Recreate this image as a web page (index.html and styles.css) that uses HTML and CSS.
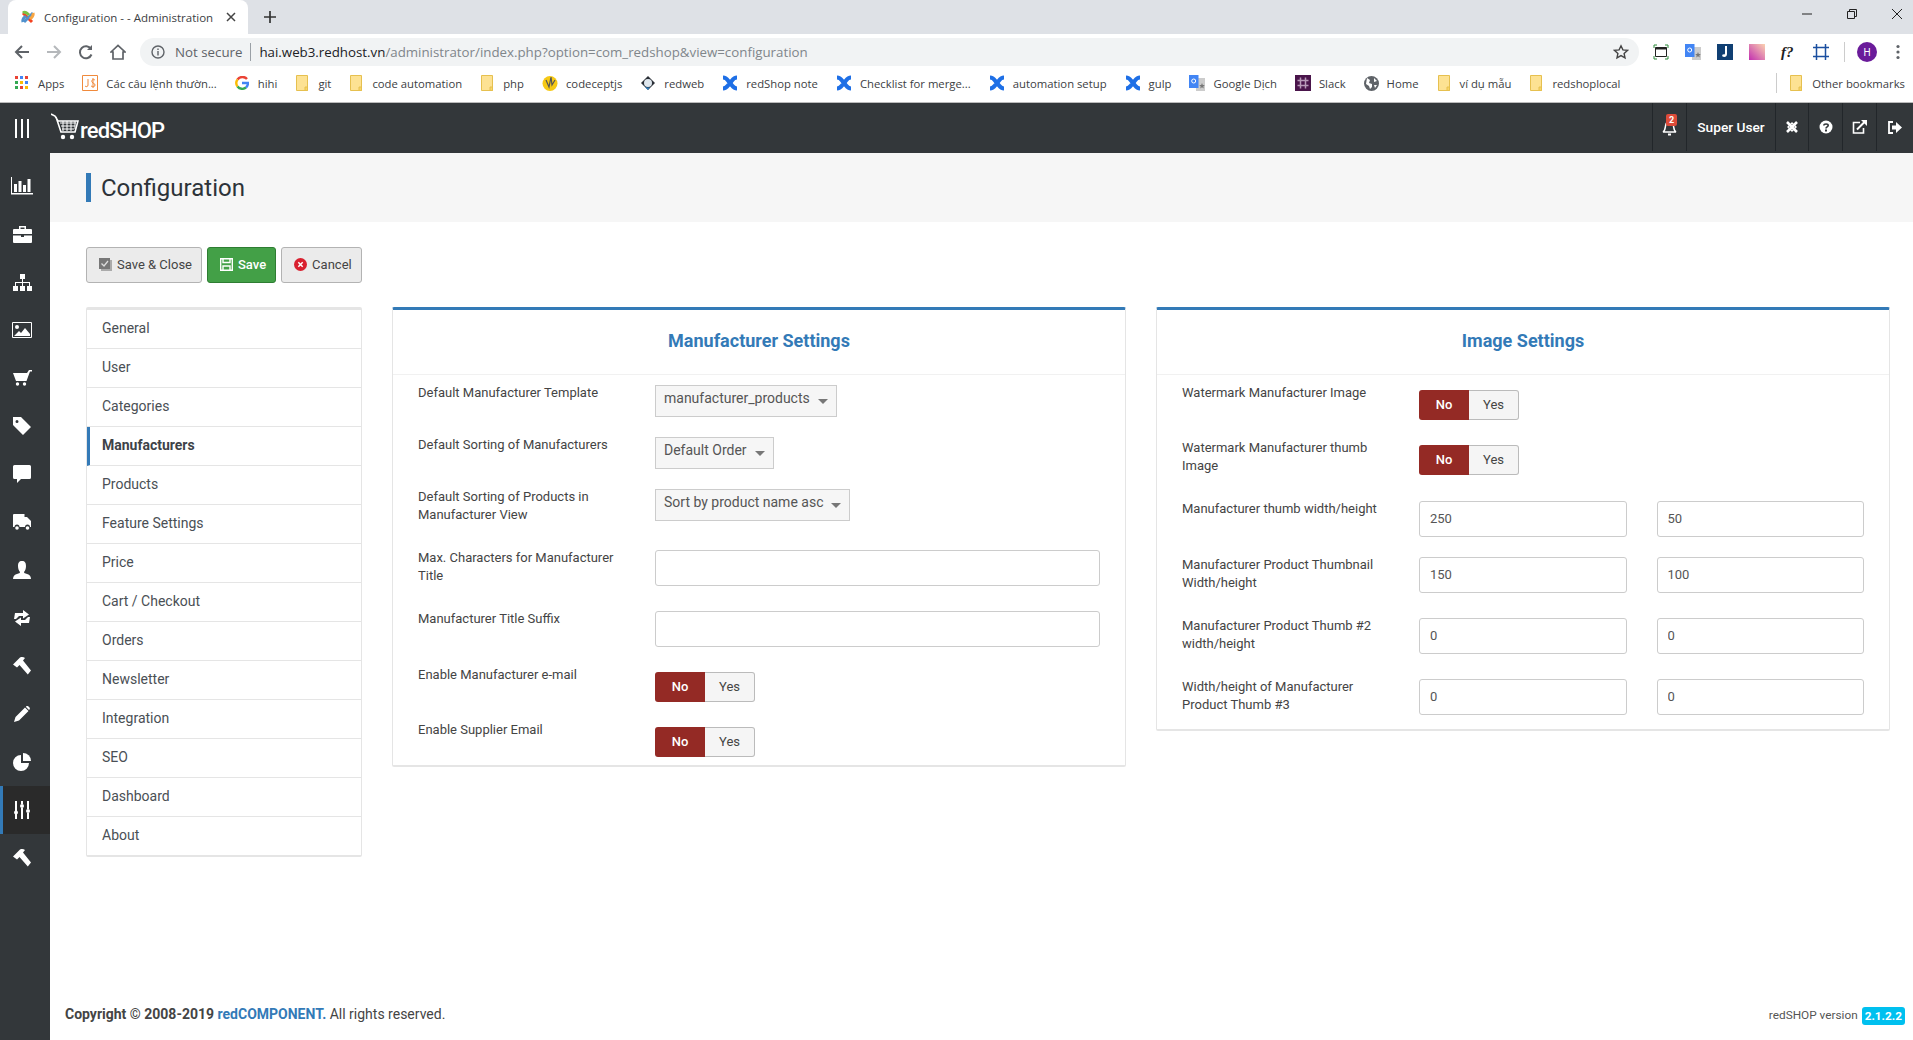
FILE: index.html
```html
<!DOCTYPE html>
<html lang="en">
<head>
	<meta charset="UTF-8">
	<title>Configuration - - Administration</title>
	<link rel="stylesheet" href="styles.css">
</head>
<body>
	<svg class="defs" width="0" height="0">
		<symbol id="folder" viewBox="0 0 12 16"><path d="M.5.5h11v15H.5z" fill="#fde293" stroke="#e6c04f"/><path d="M9 12h2.500v3.500H9z" fill="#f8d667" stroke="#e6c04f"/></symbol>
		<symbol id="cross" viewBox="0 0 16 16"><path d="M1 2.500c4 0 4.500 3 7 5.500s3 5.500 7 5.500M15 2.500c-4 0-4.500 3-7 5.500s-3 5.500-7 5.500" fill="none" stroke="#1e6fe6" stroke-width="4"/></symbol>
		<symbol id="gt" viewBox="0 0 16 16"><path d="M7 3h9v13H7z" fill="#ccc"/><path d="M0 0h9.500v13H0z" fill="#4285f4"/><path d="M13 8l.8 2 2 .1-1.500 1.300.5 2-1.800-1.100-1.800 1.100.5-2-1.500-1.300 2-.1z" fill="#777"/><circle cx="4.700" cy="6" r="2" fill="none" stroke="#fff"/></symbol>
		<symbol id="hammer" viewBox="0 0 18 18"><path d="M0 7.500L7 .5c2-.7 3.500-.5 5 .5L10 3.500 18 13.500 14.800 17.500 6.500 8 4 10.500z" fill="#fff"/></symbol>
	</svg>

	<div class="tabs">
		<div class="tab">
			<svg width="16" height="17" viewBox="0 0 16 17" fill="none" stroke-width="3"><path d="M3 4l5 5 4 4" stroke="#f44321"/><path d="M13 4L8 9l-4 4" stroke="#5091cd"/><path d="M3 4c2-2 4 0 6 2" stroke="#7ac143"/><path d="M13 4c1 3-1 4-3 6" stroke="#f9a541"/><path d="M3 13c-1-3 1-4 3-6" stroke="#5091cd"/></svg>
			<span class="tab-name">Configuration - - Administration</span>
			<svg class="tab-x" width="10" height="10" viewBox="0 0 10 10"><path d="M1 1l8 8M9 1L1 9" stroke="#444" stroke-width="1.500"/></svg>
		</div>
		<svg class="tab-add" width="14" height="14" viewBox="0 0 14 14"><path d="M7 1v12M1 7h12" stroke="#333" stroke-width="1.700"/></svg>
		<div class="win">
			<svg width="12" height="12" viewBox="0 0 12 12"><path d="M1 6h10" stroke="#222"/></svg>
			<svg width="12" height="12" viewBox="0 0 12 12" fill="none" stroke="#222"><path d="M1.500 3.500h7v7h-7zM3.500 3.500v-2h7v7h-2"/></svg>
			<svg width="12" height="12" viewBox="0 0 12 12"><path d="M1 1l10 10M11 1L1 11" stroke="#222"/></svg>
		</div>
	</div>

	<div class="toolbar">
		<svg class="nav-ico" width="16" height="16" viewBox="0 0 16 16" fill="none" stroke="#5f6368" stroke-width="2"><path d="M15 8H2M8 2L2 8l6 6"/></svg>
		<svg class="nav-ico" width="16" height="16" viewBox="0 0 16 16" fill="none" stroke="#b5b8bb" stroke-width="2"><path d="M1 8h13M8 2l6 6-6 6"/></svg>
		<svg class="nav-ico" width="16" height="16" viewBox="0 0 16 16" fill="none" stroke="#5f6368" stroke-width="2"><path d="M13.500 10.500a6 6 0 1 1-.5-5.500"/><path d="M14 1v5H9" fill="#5f6368" stroke="none"/></svg>
		<svg class="nav-ico" width="16" height="16" viewBox="0 0 16 16" fill="none" stroke="#5f6368" stroke-width="1.700"><path d="M1 8l7-6.500L15 8h-2v7H3V8z"/></svg>
		<div class="omni">
			<svg width="14" height="14" viewBox="0 0 14 14" fill="none" stroke="#5f6368" stroke-width="1.400"><circle cx="7" cy="7" r="6"/><path d="M7 6v4.500M7 3.500v1.500"/></svg>
			<span class="secure">Not secure</span>
			<span class="omni-line"></span>
			<span class="url"><b>hai.web3.redhost.vn</b>/administrator/index.php?option=com_redshop&amp;view=configuration</span>
			<svg class="star" width="16" height="16" viewBox="0 0 16 16" fill="none" stroke="#444" stroke-width="1.400"><path d="M8 1.800l1.900 4.100 4.500.5-3.300 3 .9 4.400L8 11.600l-4 2.200.9-4.400-3.300-3 4.500-.5z"/></svg>
		</div>
		<div class="ext">
			<svg width="16" height="16" viewBox="0 0 16 16" fill="none"><path d="M1 4V1h3M12 1h3v3M15 12v3h-3M4 15H1v-3" stroke="#2e8b3d"/><path d="M2.500 3.500h11v9h-11z" stroke="#222"/><path d="M2.500 3.500h11v2h-11z" fill="#222"/></svg>
			<svg width="16" height="16"><use href="#gt"/></svg>
			<svg width="16" height="16" viewBox="0 0 16 16"><path d="M0 0h16v16H0z" fill="#103f73"/><path d="M10 2v8c0 3-3 4-5 2l1-2c1 1 2 .5 2-1V2z" fill="#fff"/></svg>
			<svg width="16" height="16" viewBox="0 0 16 16"><defs><linearGradient id="gr" x1="1" y1="0" x2="0" y2="1"><stop offset="0" stop-color="#fbd3b0"/><stop offset="1" stop-color="#c22fb0"/></linearGradient></defs><path d="M0 0h16v16H0z" fill="url(#gr)"/></svg>
			<span class="ext-f">f?</span>
			<svg width="16" height="16" viewBox="0 0 16 16" fill="none" stroke="#1b4fa0" stroke-width="1.500"><path d="M3.500 0v16M12.500 0v16M0 3.500h16M0 12.500h16"/></svg>
			<span class="ext-line"></span>
			<span class="avatar">H</span>
			<svg width="4" height="16" viewBox="0 0 4 16" fill="#5f6368"><circle cx="2" cy="2.500" r="1.600"/><circle cx="2" cy="8" r="1.600"/><circle cx="2" cy="13.500" r="1.600"/></svg>
		</div>
	</div>

	<div class="bookmarks">
		<a class="bm bm-apps"><svg width="14" height="14" viewBox="0 0 14 14"><path d="M0 0h3v3H0z" fill="#ea4335"/><path d="M5 0h3v3H5z" fill="#4285f4"/><path d="M10 0h3v3h-3z" fill="#ea4335"/><path d="M0 5h3v3H0z" fill="#34a853"/><path d="M5 5h3v3H5z" fill="#fbbc05"/><path d="M10 5h3v3h-3z" fill="#4285f4"/><path d="M0 10h3v3H0z" fill="#34a853"/><path d="M5 10h3v3H5z" fill="#ea4335"/><path d="M10 10h3v3h-3z" fill="#fbbc05"/></svg>Apps</a>
		<a class="bm"><svg width="16" height="16" viewBox="0 0 16 16"><path d="M.5.500h15v15H.5z" fill="#fff" stroke="#f08a3c"/><path d="M6 4v6c0 2-2 2-3 1M13 5c-2-1-4 0-3 2s3 1 3 3-2 2-4 1M11 3v10" fill="none" stroke="#f08a3c"/></svg>Các câu lệnh thườn...</a>
		<a class="bm bm-apps"><svg width="14" height="14" viewBox="0 0 14 14" fill="none" stroke-width="2.400"><path d="M12 3a6 6 0 0 0-5-2A6 6 0 0 0 2.500 3.500" stroke="#ea4335"/><path d="M2.500 3.500a6 6 0 0 0 0 7" stroke="#fbbc05"/><path d="M2.500 10.500A6 6 0 0 0 11 11.500" stroke="#34a853"/><path d="M11 11.500A6 6 0 0 0 13 7H7" stroke="#4285f4"/></svg>hihi</a>
		<a class="bm bm-folder"><svg width="12" height="16"><use href="#folder"/></svg>git</a>
		<a class="bm bm-folder"><svg width="12" height="16"><use href="#folder"/></svg>code automation</a>
		<a class="bm bm-folder"><svg width="12" height="16"><use href="#folder"/></svg>php</a>
		<a class="bm"><svg width="16" height="16" viewBox="0 0 16 16"><circle cx="8" cy="8.500" r="7.500" fill="#f6c915"/><path d="M4 5l3 7 2-10 1 8 3-5" fill="none" stroke="#555" stroke-width="1.200"/></svg>codeceptjs</a>
		<a class="bm"><svg width="16" height="16" viewBox="0 0 16 16"><path d="M8 1l7 7-7 7-7-7z" fill="#2a2f36"/><circle cx="8" cy="8" r="4" fill="#dfe7ee"/><path d="M2 9c3 4 6 4 8 3l-2 3z" fill="#2d7fc1"/></svg>redweb</a>
		<a class="bm"><svg width="16" height="16"><use href="#cross"/></svg>redShop note</a>
		<a class="bm"><svg width="16" height="16"><use href="#cross"/></svg>Checklist for merge...</a>
		<a class="bm"><svg width="16" height="16"><use href="#cross"/></svg>automation setup</a>
		<a class="bm"><svg width="16" height="16"><use href="#cross"/></svg>gulp</a>
		<a class="bm"><svg width="16" height="16"><use href="#gt"/></svg>Google Dịch</a>
		<a class="bm"><svg width="16" height="16" viewBox="0 0 16 16"><path d="M0 0h16v16H0z" fill="#4a154b"/><path d="M5.500 2.500v11M10.500 2.500v11M2.500 5.500h11M2.500 10.500h11" stroke="#b79ab8" stroke-width="1.500"/></svg>Slack</a>
		<a class="bm"><svg width="15" height="15" viewBox="0 0 15 15"><circle cx="7.500" cy="7.500" r="7.500" fill="#5f6368"/><path d="M3 2l3 2-1 3 3 1 0 3-2 2-1-3-3-2zM10 2l3 3-3 1zM10 9l3 0-2 3z" fill="#fff"/></svg>Home</a>
		<a class="bm bm-folder"><svg width="12" height="16"><use href="#folder"/></svg>ví dụ mẫu</a>
		<a class="bm bm-folder"><svg width="12" height="16"><use href="#folder"/></svg>redshoplocal</a>
		<span class="bm-line"></span>
		<a class="bm bm-folder bm-other"><svg width="12" height="16"><use href="#folder"/></svg>Other bookmarks</a>
	</div>

	<header class="top">
		<svg class="burger" width="14" height="19" viewBox="0 0 14 19"><path d="M1 0v19M7 0v19M13 0v19" stroke="#fff" stroke-width="2"/></svg>
		<div class="logo">
			<svg width="28" height="27" viewBox="0 0 28 27"><path d="M0 1l4 2 3 5h20l-3 11H10L5 4" fill="none" stroke="#fff" stroke-width="1.600"/><path d="M9 10h16M10 13h14M11 16h12M12 8v10M16 8v10M20 8v10M24 8v8" stroke="#fff"/><circle cx="12" cy="24" r="2.200" fill="#fff"/><circle cx="21" cy="24" r="2.200" fill="#fff"/></svg>
			<span>redSHOP</span>
		</div>
		<div class="top-right">
			<div class="top-cell top-bell">
				<svg width="15" height="17" viewBox="0 0 15 17" fill="none" stroke="#fff" stroke-width="1.500"><path d="M1 13c2-1 2-3 2.500-6S5 2 7.500 2s3.500 2 4 5 .5 5 2.500 6z"/><path d="M6 15.500h3" stroke-width="2"/></svg>
				<span class="badge">2</span>
			</div>
			<div class="top-cell top-user">Super User</div>
			<div class="top-cell top-joomla">
				<svg width="14" height="14" viewBox="0 0 14 14" fill="none" stroke="#fff" stroke-width="2.600"><path d="M2 2l10 10M12 2L2 12"/><path d="M3 7l4-4 4 4-4 4z" stroke-width="1.400"/></svg>
			</div>
			<div class="top-cell">
				<svg width="14" height="14" viewBox="0 0 14 14"><circle cx="7" cy="7" r="6.500" fill="#fff"/><path d="M4.800 5.500C5 3.500 9.200 3.500 9.200 5.500 9.200 7 7 6.800 7 8.500" fill="none" stroke="#33373a" stroke-width="1.600"/><path d="M6 9.500h2v2H6z" fill="#33373a"/></svg>
			</div>
			<div class="top-cell">
				<svg width="15" height="14" viewBox="0 0 15 14" fill="none" stroke="#fff" stroke-width="1.600"><path d="M8 2.500H1.500v10.500h10V8"/><path d="M5 9.500L13.500 1" stroke-width="2"/><path d="M9 0h6v6z" fill="#fff" stroke="none"/></svg>
			</div>
			<div class="top-cell top-last">
				<svg width="14" height="13" viewBox="0 0 14 13"><path d="M5 1H1v11h4" fill="none" stroke="#fff" stroke-width="1.800"/><path d="M4 4.500h4V1l6 5.500L8 12V8.500H4z" fill="#fff"/></svg>
			</div>
		</div>
	</header>

	<div class="app">
		<aside class="side">
			<a class="side-item"><svg width="22" height="18" viewBox="0 0 22 18" fill="#fff"><path d="M0 0h1v16h21v1.500H0z"/><path d="M3 7h3v8H3zM7.500 4h3v11h-3zM12 8h3v7h-3zM16.500 2h3v13h-3z"/></svg></a>
			<a class="side-item"><svg width="19" height="17" viewBox="0 0 19 17" fill="#fff"><path d="M6 3V0h7v3h-1.500V1.500h-4V3z"/><path d="M1 3h17a1 1 0 0 1 1 1v4H0V4a1 1 0 0 1 1-1zM0 9.500h8V11h3V9.500h8V16a1 1 0 0 1-1 1H1a1 1 0 0 1-1-1z"/></svg></a>
			<a class="side-item"><svg width="19" height="17" viewBox="0 0 19 17" fill="#fff"><path d="M7 0h5v5h-5zM0 12h5v5H0zM7 12h5v5H7zM14 12h5v5h-5z"/><path d="M9 5h1v3h7v4h-1V9h-6v3H9V9H3v3H2V8h7z"/></svg></a>
			<a class="side-item"><svg width="20" height="16" viewBox="0 0 20 16"><path d="M.5.500h19v15H.5z" fill="#33373a" stroke="#fff"/><circle cx="5" cy="5" r="2" fill="#fff"/><path d="M2 14l5-5 2 2 4-5 5 6v2z" fill="#fff"/></svg></a>
			<a class="side-item"><svg width="19" height="16" viewBox="0 0 19 16" fill="#fff"><path d="M0 3h14l2-3h3v1.500h-2l-3.500 9.500H3z"/><circle cx="4.500" cy="14" r="1.700"/><circle cx="11.500" cy="14" r="1.700"/></svg></a>
			<a class="side-item"><svg width="18" height="18" viewBox="0 0 18 18" fill="#fff"><path fill-rule="evenodd" d="M0 0h8l10 10-8 8L0 8zM4 3a1.500 1.500 0 1 0 0 3 1.500 1.500 0 0 0 0-3z"/></svg></a>
			<a class="side-item"><svg width="18" height="18" viewBox="0 0 18 18" fill="#fff"><path d="M1.500 0h15A1.500 1.500 0 0 1 18 1.500v11a1.500 1.500 0 0 1-1.500 1.500H8L4 18v-4H1.500A1.500 1.500 0 0 1 0 12.500v-11A1.500 1.500 0 0 1 1.500 0z"/></svg></a>
			<a class="side-item"><svg width="18" height="16" viewBox="0 0 18 16" fill="#fff"><path d="M1 0h10.500v3H14l4 4v6h-1a2.500 2.500 0 0 0-5 0H6.500a2.500 2.500 0 0 0-5 0H0V1a1 1 0 0 1 1-1z"/><circle cx="4" cy="14" r="1.800"/><circle cx="14.500" cy="14" r="1.800"/></svg></a>
			<a class="side-item"><svg width="18" height="18" viewBox="0 0 18 18" fill="#fff"><path d="M9 0c3 0 4 2 4 5s-1 5-2 6c0 1 1 1.500 3 2s4 2 4 5H0c0-3 2-4.500 4-5s3-1 3-2c-1-1-2-3-2-6s1-5 4-5z"/></svg></a>
			<a class="side-item"><svg width="16" height="16" viewBox="0 0 16 16" fill="#fff"><path d="M1 3h8V0l6 4.500L9 8.500V6H5l-3 3H0zM15 13H7v3l-6-4.500L7 7.500V10h4l3-3h2z"/></svg></a>
			<a class="side-item"><svg width="18" height="18"><use href="#hammer"/></svg></a>
			<a class="side-item"><svg width="16" height="16" viewBox="0 0 16 16" fill="#fff"><path d="M0 16l1.500-5L11 1.500 14.500 5 5 14.500zM12 .5c1-1 2-.5 2.500 0l1 1c.5.5.5 1.500 0 2L15 4 12 1z"/></svg></a>
			<a class="side-item"><svg width="18" height="18" viewBox="0 0 18 18" fill="#fff"><path d="M8 2v8h8a8 8 0 1 1-8-8z"/><path d="M10 0a8 8 0 0 1 8 8h-8z"/></svg></a>
			<a class="side-item side-on"><svg width="16" height="18" viewBox="0 0 16 18" fill="#fff"><path d="M1 0h2v10H1zM1 13h2v5H1zM7 0h2v3H7zM7 7h2v11H7zM13 0h2v8h-2zM13 12h2v6h-2z"/><circle cx="2" cy="11.500" r="2"/><circle cx="8" cy="5" r="2"/><circle cx="14" cy="10" r="2"/></svg></a>
			<a class="side-item"><svg width="18" height="18"><use href="#hammer"/></svg></a>
		</aside>

		<main class="main">
			<div class="title-band"><h1>Configuration</h1></div>

			<div class="content">
				<div class="buttons">
					<a class="btn">
						<svg width="13" height="13" viewBox="0 0 13 13"><path d="M2 2h11v11H2z" fill="#aaa"/><path d="M0 0h11v11H0z" fill="#777"/><path d="M2.500 5.500l2.500 2.500 4-5" fill="none" stroke="#ddd" stroke-width="1.300"/></svg>
						Save &amp; Close
					</a>
					<a class="btn btn-save">
						<svg width="13" height="13" viewBox="0 0 13 13" fill="none" stroke="#fff" stroke-width="1.400"><path d="M.7.700h11.600v11.600H.7zM3 1v3.500h7V1M3 12V8h7v4"/></svg>
						Save
					</a>
					<a class="btn">
						<svg width="13" height="13" viewBox="0 0 13 13"><circle cx="6.500" cy="6.500" r="6.500" fill="#d9202f"/><path d="M4.300 4.300l4.400 4.400M8.700 4.300L4.300 8.700" stroke="#fff" stroke-width="1.500"/></svg>
						Cancel
					</a>
				</div>

				<div class="config">
					<ul class="menu">
						<li>General</li>
						<li>User</li>
						<li>Categories</li>
						<li class="active">Manufacturers</li>
						<li>Products</li>
						<li>Feature Settings</li>
						<li>Price</li>
						<li>Cart / Checkout</li>
						<li>Orders</li>
						<li>Newsletter</li>
						<li>Integration</li>
						<li>SEO</li>
						<li>Dashboard</li>
						<li>About</li>
					</ul>

					<section class="panel">
						<h2>Manufacturer Settings</h2>
						<div class="panel-body">
							<div class="row">
								<label>Default Manufacturer Template</label>
								<div class="ctl"><div class="select">manufacturer_products</div></div>
							</div>
							<div class="row">
								<label>Default Sorting of Manufacturers</label>
								<div class="ctl"><div class="select">Default Order</div></div>
							</div>
							<div class="row row-wide">
								<label>Default Sorting of Products in Manufacturer View</label>
								<div class="ctl"><div class="select">Sort by product name asc</div></div>
							</div>
							<div class="row row-wide">
								<label>Max. Characters for Manufacturer Title</label>
								<div class="ctl"><input class="field" type="text"></div>
							</div>
							<div class="row">
								<label>Manufacturer Title Suffix</label>
								<div class="ctl"><input class="field" type="text"></div>
							</div>
							<div class="row">
								<label>Enable Manufacturer e-mail</label>
								<div class="ctl"><div class="toggle"><span class="no">No</span><span class="yes">Yes</span></div></div>
							</div>
							<div class="row">
								<label>Enable Supplier Email</label>
								<div class="ctl"><div class="toggle"><span class="no">No</span><span class="yes">Yes</span></div></div>
							</div>
						</div>
					</section>

					<section class="panel panel-image">
						<h2>Image Settings</h2>
						<div class="panel-body">
							<div class="row">
								<label>Watermark Manufacturer Image</label>
								<div class="ctl"><div class="toggle"><span class="no">No</span><span class="yes">Yes</span></div></div>
							</div>
							<div class="row row-wide">
								<label>Watermark Manufacturer thumb Image</label>
								<div class="ctl"><div class="toggle"><span class="no">No</span><span class="yes">Yes</span></div></div>
							</div>
							<div class="row">
								<label>Manufacturer thumb width/height</label>
								<div class="ctl ctl-two"><input class="field" type="text" value="250"><input class="field" type="text" value="50"></div>
							</div>
							<div class="row row-wide">
								<label>Manufacturer Product Thumbnail Width/height</label>
								<div class="ctl ctl-two"><input class="field" type="text" value="150"><input class="field" type="text" value="100"></div>
							</div>
							<div class="row row-wide">
								<label>Manufacturer Product Thumb #2 width/height</label>
								<div class="ctl ctl-two"><input class="field" type="text" value="0"><input class="field" type="text" value="0"></div>
							</div>
							<div class="row">
								<label>Width/height of Manufacturer Product Thumb #3</label>
								<div class="ctl ctl-two"><input class="field" type="text" value="0"><input class="field" type="text" value="0"></div>
							</div>
						</div>
					</section>
				</div>
			</div>

			<footer class="foot">
				<div class="copy"><b>Copyright © 2008-2019 <a>redCOMPONENT.</a></b> All rights reserved.</div>
				<div class="version">redSHOP version <span class="ver">2.1.2.2</span></div>
			</footer>
		</main>
	</div>
</body>
</html>
```

FILE: styles.css
```css
*{box-sizing:border-box;}
html,body{margin:0;padding:0;height:100%;overflow:hidden;}
body{display:flex;flex-direction:column;font-family:Roboto,"Liberation Sans",sans-serif;font-size:13px;color:#444;background:#fff;}
.defs{position:absolute;}
svg{display:block;flex:none;}

/* browser */
.tabs{height:34px;background:#dee1e6;display:flex;align-items:flex-end;padding-left:8px;flex:none;}
.tab{width:240px;height:34px;background:#fff;border-radius:8px 8px 0 0;display:flex;align-items:center;padding:0 12px;color:#3c4043;font-size:12px;}
.tab-name{margin-left:8px;flex:1;white-space:nowrap;font-family:"Open Sans",sans-serif;font-size:11.500px;}
.tab-add{margin:0 0 10px 15px;}
.win{margin-left:auto;display:flex;gap:33px;padding-right:10px;align-self:flex-start;padding-top:8px;}
.toolbar{height:32px;background:#fff;display:flex;align-items:center;padding:4px 0 0 14px;flex:none;}
.nav-ico{margin-right:16px;}
.omni{width:1499px;height:28px;margin-left:-2px;background:#f1f3f4;border-radius:14px;display:flex;align-items:center;padding:0 10px 0 11px;font-family:"Open Sans",sans-serif;font-size:13.300px;color:#5f6368;white-space:nowrap;}
.secure{margin-left:10px;}
.omni-line{width:1px;height:18px;background:#9aa0a6;margin:0 8px;}
.url{color:#80868b;}
.url b{font-weight:400;color:#202124;}
.star{margin-left:auto;}
.ext{display:flex;align-items:center;gap:16px;margin-left:14px;}
.ext-f{width:16px;font:italic 700 15px "Liberation Serif",serif;color:#222;}
.ext-line{width:1px;height:20px;background:#ccc;margin:0 -4px 0 -1px;}
.avatar{width:20px;height:20px;border-radius:50%;background:#6a1b9a;color:#fff;font-size:10px;display:flex;align-items:center;justify-content:center;margin-right:3px;}
.bookmarks{height:37px;background:#fff;border-bottom:1px solid #bbb;display:flex;align-items:center;padding:0 8px 2px 15px;font-family:"Open Sans",sans-serif;font-size:11.300px;color:#3c4043;white-space:nowrap;flex:none;}
.bm{display:flex;align-items:center;gap:8px;margin-right:18px;}
.bm-apps{gap:9px;}
.bm-folder{gap:10px;margin-left:1px;}
.bm-line{margin-left:auto;width:1px;height:20px;background:#ccc;margin-right:12px;}
.bm-other{margin-right:0;}

/* admin header */
.top{height:50px;background:#33373a;display:flex;align-items:center;flex:none;}
.burger{margin-left:15px;}
.logo{display:flex;align-items:flex-start;margin-left:22px;color:#fff;font-size:22px;font-weight:500;letter-spacing:-.8px;}
.logo span{margin:5px 0 0 1px;line-height:26px;}
.top-right{margin-left:auto;display:flex;height:48px;align-self:flex-start;color:#fff;}
.top-cell{width:34px;border-left:1px solid #22262a;display:flex;align-items:center;justify-content:center;position:relative;}
.top-joomla{width:33px;}
.top-user{width:89px;padding-bottom:1px;font-size:13.700px;font-weight:500;}
.top-last{width:37px;}
.badge{position:absolute;top:11px;right:9px;width:11px;height:12px;background:#dd4b39;border-radius:2px;font-size:9px;font-weight:700;line-height:12px;text-align:center;}

/* layout */
.app{flex:1;display:flex;min-height:0;}
.side{width:50px;background:#33373a;padding-top:9px;flex:none;}
.side-item{height:48px;display:flex;align-items:center;justify-content:center;padding-right:6px;}
.side-on{background:#2a2a2a;border-left:3px solid #337ab7;padding-right:9px;}
.main{flex:1;display:flex;flex-direction:column;min-width:0;}
.title-band{height:69px;background:#f6f6f6;padding:20px 0 0 36px;}
h1{margin:0;height:29px;border-left:5px solid #337ab7;padding-left:10px;font-size:24px;font-weight:400;line-height:31px;color:#2d3339;}
.content{padding:25px 23px 0 36px;}

/* toolbar buttons */
.buttons{display:flex;gap:5px;}
.btn{height:36px;display:flex;align-items:center;gap:5px;padding:0 9px 1px 12px;background:#ebebeb;border:1px solid #b3b3b3;border-radius:3px;color:#444;font-size:13px;}
.btn-save{background:#43a047;border-color:#2e7d32;color:#fff;font-weight:500;}

.config{display:grid;grid-template-columns:276px 734px 734px;column-gap:30px;align-items:start;margin-top:24px;}

/* side menu */
.menu{list-style:none;margin:0;padding:0;border:1px solid #e5e5e5;border-top-width:3px;border-bottom-width:2px;border-radius:2px;font-size:14px;color:#4a4f55;}
.menu li{height:39px;line-height:36px;padding-left:15px;border-bottom:1px solid #e5e5e5;}
.menu li:last-child{border-bottom:0;height:38px;}
.menu .active{font-weight:700;border-left:3px solid #337ab7;padding-left:12px;color:#3d4248;}

/* panels */
.panel{border:1px solid #e5e5e5;border-top:3px solid #337ab7;border-bottom-width:2px;border-radius:2px;}
.panel h2{margin:0;height:65px;border-bottom:1px solid #f1f1f1;text-align:center;font-size:18px;font-weight:700;line-height:61px;color:#337ab7;}
.panel-body{padding:9px 20px 0 25px;}
.row{display:flex;margin-bottom:19px;min-height:33px;}
.row-wide{min-height:37px;margin-bottom:24px;}
.row:last-child{margin-bottom:8px;}
.panel-image .row:last-child{margin-bottom:14px;}
.row label{width:237px;padding-right:26px;line-height:18px;font-size:13px;color:#444;flex:none;}
.ctl{flex:1;display:flex;align-items:flex-start;min-width:0;padding-right:5px;}
.ctl-two{gap:30px;}
.select{margin-top:1px;height:32px;display:flex;padding:0 8px 7px 8px;align-items:center;background:#f6f6f6;border:1px solid #ccc;font-size:14px;color:#555;white-space:nowrap;}
.select::after{content:"";margin:7px 0 0 8px;border:5px solid transparent;border-top-color:#777;border-bottom:0;}
.field{margin-top:1px;width:100%;min-width:0;height:36px;padding:0 10px 2px;border:1px solid #ccc;border-radius:3px;background:#fff;font:13px Roboto,sans-serif;color:#555;}
.toggle{margin-top:6px;display:flex;height:30px;width:100px;line-height:27px;text-align:center;font-size:13px;}
.no{width:50px;background:#942a25;color:#fff;font-weight:500;border-radius:3px 0 0 3px;line-height:29px;}
.yes{width:50px;background:#f5f5f5;border:1px solid #bbb;border-left:0;border-radius:0 3px 3px 0;color:#444;}

/* footer */
.foot{margin-top:auto;height:50px;display:flex;justify-content:space-between;padding:16px 8px 0 15px;font-size:14px;color:#444;}
.foot a{color:#337ab7;}
.version{font-size:11.800px;display:flex;align-items:flex-start;gap:4px;padding-top:2px;color:#555;}
.ver{height:18px;padding:0 3px;margin-top:-1px;background:#00c0ef;border-radius:3px;color:#fff;font-weight:700;line-height:18px;}
```
